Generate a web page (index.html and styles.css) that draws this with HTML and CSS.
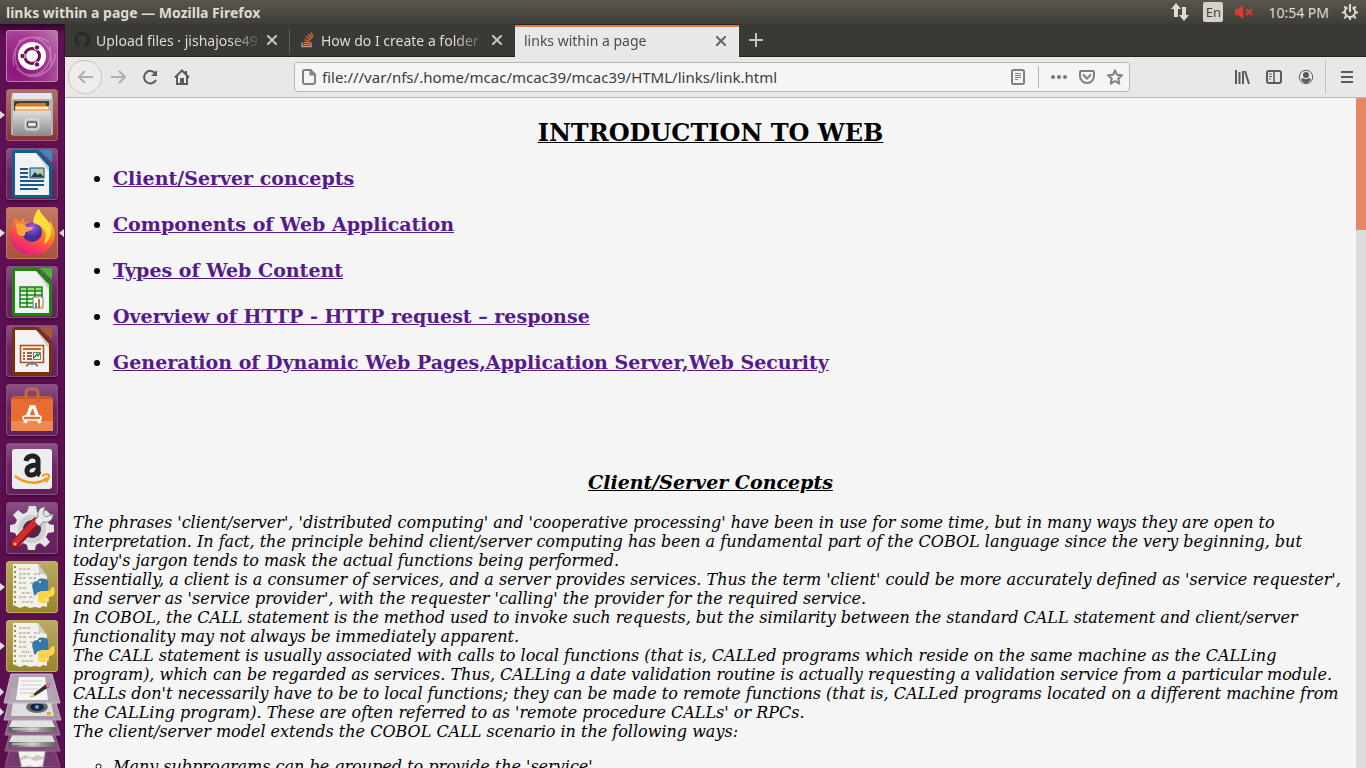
FILE: index.html
```html
<!DOCTYPE html>
<html lang="en">
<head>
<meta charset="utf-8">
<title>links within a page</title>
<link rel="stylesheet" href="styles.css">
</head>
<body>
<header class="panel">
  <span class="panel-title">links within a page — Mozilla Firefox</span>
  <div class="indicators">
    <button class="ind" aria-label="Network"><svg width="18" height="18" viewBox="0 0 18 18" fill="#dfdbd2"><path d="M5 0l5 6H7v8H3V6H0z"/><path d="M13 18l-5-6h3V4h4v8h3z"/></svg></button>
    <button class="ind lang">En</button>
    <button class="ind sound" aria-label="Sound muted"><svg width="18" height="14" viewBox="0 0 18 14"><path d="M0 4h3l5-4v14l-5-4H0z" fill="#df382c"/><path d="M11 4l6 6m0-6l-6 6" stroke="#df382c" stroke-width="2"/></svg></button>
    <button class="ind clock">10:54 PM</button>
    <button class="ind" aria-label="Session"><svg width="18" height="18" viewBox="0 0 18 18" fill="none" stroke="#dfdbd2" stroke-width="2"><path d="M6.500 4.300a5.200 5.200 0 1 0 5 0M9 1v8"/><path d="M9 14.500V17M1 9.500h2.500M14.500 9.500H17M3.200 3.500L5 5.300M14.800 3.500L13 5.300M3.200 15.300L5 13.500M14.800 15.300L13 13.500"/></svg></button>
  </div>
</header>
<div class="desktop">
  <nav class="launcher" aria-label="Launcher">
    <button class="tile dash" aria-label="Dash"><svg viewBox="0 0 52 52"><g fill="none" stroke="#fff" stroke-opacity=".28" stroke-width="1.500"><path d="M8 36C3 12 25 0 43 12M12 12C33-3 52 22 43 40M44 16c5 25-19 38-34 22M39 42C20 54 2 36 12 14M16 43C34 54 50 36 49 24"/></g><circle cx="26" cy="26" r="14" fill="#fff"/><circle cx="26" cy="26" r="7.500" fill="none" stroke="#6d1156" stroke-width="3"/><g fill="#6d1156" stroke="#fff"><circle cx="16.500" cy="26" r="2.700"/><circle cx="31" cy="17.500" r="2.700"/><circle cx="31" cy="34.500" r="2.700"/></g></svg></button>
    <button class="tile files running" aria-label="Files"><svg viewBox="0 0 52 52"><defs><linearGradient id="cab" x2="0" y2="1"><stop stop-color="#dedede"/><stop offset="1" stop-color="#8a8a8a"/></linearGradient></defs><path d="M6 4h40l1 7v35H5V11z" fill="#b4b4b0"/><path d="M7 4h38l1 6H6z" fill="#e6e6e6"/><path d="M8 12h35v12H8z" fill="#403d38"/><path d="M10 15l4-1h26v8H9z" fill="#e27027"/><path d="M9 17h34v6H9z" fill="#f8b269"/><path d="M10 18h32v2H10z" fill="#fff3d5"/><path d="M7 22h38v25H7z" fill="url(#cab)"/><rect x="19" y="30" width="14" height="11" rx="3" fill="#c4c4c4" stroke="#e2e2e2"/><rect x="21.500" y="33" width="9" height="5" rx="1" fill="#eee" stroke="#555" stroke-width="1.500"/></svg></button>
    <button class="tile" aria-label="LibreOffice Writer"><svg viewBox="0 0 52 52"><path d="M9 2h23l14 15v30a3 3 0 0 1-3 3H9a3 3 0 0 1-3-3V5a3 3 0 0 1 3-3z" fill="#0e5f91"/><path d="M34 2h10q2 0 2 2v10z" fill="#398dba"/><path d="M9 5h21l13 14v28H9z" fill="#f2f2f2"/><path d="M30 5l13 14v5z" fill="#ccc"/><path d="M14 21h8M14 25h8M14 29h8M14 33h24M14 37h24M14 41h18" stroke="#125b8c" stroke-width="2"/><path d="M24 20h14v10H24z" fill="#a6d0e8" stroke="#124766"/><circle cx="35" cy="23" r="2" fill="#f7c42d"/><path d="M25 29l4-5 3 3 2-2 4 4z" fill="#283a35"/></svg></button>
    <button class="tile firefox running focused" aria-label="Firefox"><svg viewBox="0 0 52 52"><defs><linearGradient id="ff" x1=".8" y1="0" x2=".3" y2="1"><stop stop-color="#fff44f"/><stop offset=".35" stop-color="#ff9a1f"/><stop offset=".65" stop-color="#ff4f45"/><stop offset="1" stop-color="#e31587"/></linearGradient><radialGradient id="globe" cx=".5" cy=".25"><stop stop-color="#a45af0"/><stop offset="1" stop-color="#442f99"/></radialGradient></defs><path d="M10 11l3 4 5-4 0 5c4-2 7-1 10 0 0-6 1-11 5-14 1 6 5 8 8 11l1 4 2-3c5 8 6 15 3 21-4 10-13 14-22 13C12 47 3 38 4 25c1-6 3-10 6-14z" fill="url(#ff)"/><circle cx="26" cy="25" r="10" fill="url(#globe)"/><path d="M10 17c4-2 9 0 11 3h6c0 3-4 4-7 5-2 2 0 4-3 4-3 0-5-1-6-3z" fill="#ffa436"/><path d="M27 16C28 9 30 5 33 2c2 7 14 13 12 24-1 6-4 9-7 11 5-12 0-18-11-21z" fill="#ffdd3d"/></svg></button>
    <button class="tile" aria-label="LibreOffice Calc"><svg viewBox="0 0 52 52"><path d="M9 2h23l14 15v30a3 3 0 0 1-3 3H9a3 3 0 0 1-3-3V5a3 3 0 0 1 3-3z" fill="#1c8710"/><path d="M34 2h10q2 0 2 2v10z" fill="#44b539"/><path d="M9 5h21l13 14v28H9z" fill="#f2f2f2"/><path d="M30 5l13 14v5z" fill="#ccc"/><path d="M14 21h22v20H14z" fill="#e1f6d8"/><path d="M14 21h22v4H14z" fill="#9bdf83"/><path d="M14 21h22v20H14zM14 25h22M14 29h22M14 33h22M14 37h22M21 21v20M29 21v20" fill="none" stroke="#178315" stroke-width="1.500"/><path d="M27 31h10v11H27z" fill="#fff" stroke="#777"/><path d="M29 37h2v5h-2z" fill="#2a8ed0"/><path d="M32 33h2v9h-2z" fill="#e5641c"/><path d="M35 39h2v3h-2z" fill="#f3be19"/></svg></button>
    <button class="tile" aria-label="LibreOffice Impress"><svg viewBox="0 0 52 52"><path d="M9 2h23l14 15v30a3 3 0 0 1-3 3H9a3 3 0 0 1-3-3V5a3 3 0 0 1 3-3z" fill="#7a310d"/><path d="M34 2h10q2 0 2 2v10z" fill="#a65b2c"/><path d="M9 5h21l13 14v28H9z" fill="#f2f2f2"/><path d="M30 5l13 14v5z" fill="#ccc"/><path d="M14.500 20.500h23v17h-23z" fill="#fff1e6" stroke="#b44c18" stroke-width="1.500"/><path d="M17 24h18" stroke="#d06427" stroke-width="2"/><path d="M17 28h2m2 0h5M17 31h2m2 0h5M17 34h2m2 0h5" stroke="#77310c" stroke-width="1.500"/><path d="M27.500 27.500h7v7h-7z" fill="#fff" stroke="#777"/><path d="M28 33l3-4 1 2 2-3" fill="none" stroke="#2a9133" stroke-width="1.500"/><path d="M26 37v3m0-3l-6 4m6-4l6 4" stroke="#777" stroke-width="2"/></svg></button>
    <button class="tile" aria-label="Ubuntu Software"><svg viewBox="0 0 52 52"><path d="M5 15l3-3h36l3 3v32H5z" fill="#e96d31"/><path d="M5 15l3-3h36l3 3z" fill="#ca5728"/><path d="M5 37h42v10H5z" fill="#f1884e"/><path d="M20 18V9q0-4 4-4h4q4 0 4 4v9" fill="none" stroke="#c9683f" stroke-width="3"/><path d="M19 39l6-16h3l6 16" fill="none" stroke="#fff" stroke-width="3.500"/><rect x="17" y="32" width="18" height="4" rx="2" fill="#e96d31" stroke="#fff" stroke-width="1.500"/></svg></button>
    <button class="tile" aria-label="Amazon"><svg viewBox="0 0 52 52"><rect x="6" y="6" width="40" height="40" rx="3" fill="#eee"/><path d="M20 18c1-6 11-7 12-1v11q0 3 2 4M32 22c-5 0-11 1-11 6 0 6 9 5 11-1" fill="none" stroke="#222" stroke-width="5"/><path d="M9 33c10 8 24 9 32 2" fill="none" stroke="#f79a17" stroke-width="2.500"/><path d="M36 33q4-3 7-1 0 4-3 7" fill="none" stroke="#f79a17" stroke-width="2"/></svg></button>
    <button class="tile" aria-label="System Settings"><svg viewBox="0 0 52 52"><path d="M23 4h7l1 6 4 2 5-4 5 5-4 5 2 4 5 1v7l-6 1-2 4 4 5-5 5-5-4-4 2-1 5h-7l-1-5-4-2-5 4-5-5 4-5-2-4-5-1v-7l5-1 2-4-4-5 5-5 5 4 4-2z" fill="#e5e5e5"/><circle cx="26" cy="27" r="14" fill="#cfcfcf"/><circle cx="26" cy="27" r="9" fill="#51264d"/><path d="M9 42l21-22" stroke="#8e171a" stroke-width="9" stroke-linecap="round"/><path d="M9 41l20-21" stroke="#d12c2d" stroke-width="6" stroke-linecap="round"/><path d="M29 20c0-2 1-4 3-5-1-6 2-10 7-10l-2 7 3 3 7-3c0 6-4 9-10 8l-4 4z" fill="#e9e9e9" stroke="#888"/><circle cx="9" cy="42" r="1.500" fill="#f6b7a7"/></svg></button>
    <button class="tile script running" aria-label="IDLE"><svg viewBox="0 0 52 52"><path d="M7 3h25l9 12v31l-4-1-3 2-5-1-5 1-5-2-5 2-7-3z" fill="#f3f2e8"/><path d="M32 3l1 9 8 3z" fill="#ccc"/><path d="M9 5v39" stroke="#9c8b40" stroke-width="2" stroke-dasharray="2 3"/><path d="M13 8h11M13 13h12m3 0h6M13 17h7m3 0h8M13 22h7m4 0h10M13 27h8M16 32h9M13 36h7m3 0h5M16 41h11" stroke="#b5b5ae" stroke-width="1.500" stroke-dasharray="3 1"/><g id="py"><path d="M27 29c-2-6 0-9 5-9v-1c1-2 9-2 10 1v8c0 3-2 3-5 3h-4c-3 0-2 5-5 3z" fill="#3678a9"/><path d="M48 26c2 6 0 10-5 10v4c-1 3-9 3-11 0v-6c0-3 2-4 5-4h5c3 0 2-4 6-4z" fill="#ffd447"/><circle cx="34" cy="21" r="1" fill="#fff"/><circle cx="40" cy="39" r="1" fill="#fff"/></g></svg></button>
    <button class="tile script running" aria-label="IDLE script"><svg viewBox="0 0 52 52"><path d="M7 3h25l9 12v31l-4-1-3 2-5-1-5 1-5-2-5 2-7-3z" fill="#f3f2e8"/><path d="M32 3l1 9 8 3z" fill="#ccc"/><path d="M9 5v39" stroke="#9c8b40" stroke-width="2" stroke-dasharray="2 3"/><path d="M13 8h11M13 13h12m3 0h6M13 17h7m3 0h8M13 22h7m4 0h10M13 27h8M16 32h9M13 36h7m3 0h5M16 41h11" stroke="#b5b5ae" stroke-width="1.500" stroke-dasharray="3 1"/><use href="#py"/></svg></button>
    <button class="stack" aria-label="Editor, disks and trash"><svg width="65" height="96" viewBox="0 0 65 96"><defs><linearGradient id="edge"><stop stop-color="#555"/><stop offset=".5" stop-color="#bbb"/><stop offset="1" stop-color="#666"/></linearGradient></defs><path d="M12 67h40l8 27H5z" fill="#74396c" stroke="#8f5b88"/><path d="M18 76h28l-3 18H21z" fill="#c9c8c5"/><path d="M18 77l6-2 6 3 6-3 9 2-2 7-6-2-5 3-7-3-5 3zM21 87l8-2 6 3 8-2-1 6-7 2-6-2-6 2z" fill="#f4f3ef"/><path d="M12 53h40l8 25H5z" fill="#804f7a" stroke="#976a91"/><path d="M14 58h36l5 11H9z" fill="#ddd"/><path d="M9 69h46v5H9z" fill="url(#edge)"/><path d="M12 71h27" stroke="#e4e4e4"/><path d="M12 37h40l8 25H5z" fill="#8a5f86" stroke="#a17c9c"/><path d="M14 43h36l5 11H9z" fill="#e3e3e2"/><path d="M9 54h46v5H9z" fill="url(#edge)"/><path d="M12 56h27" stroke="#e4e4e4"/><path d="M12 16h40l9 31H4z" fill="#a892a6" stroke="#bcaaba"/><path d="M13 29h38l3 14H11z" fill="#dededc"/><ellipse cx="37" cy="34" rx="11" ry="6" fill="#646a70"/><ellipse cx="37" cy="34" rx="7" ry="4" fill="#18253a"/><circle cx="37" cy="34" r="2" fill="#6d9cd0"/><path d="M47 39h4v3h-4z" fill="#eaa72b"/><path d="M11 1h41l8 29H4z" fill="#b5a8b3" fill-opacity=".95" stroke="#c7bdc6"/><path d="M19 4h26l3 23H16z" fill="#f5f5f4"/><path d="M21 8h22M21 12h20M20 16h18M20 20h13" stroke="#ccc"/><path d="M32 22l14-11 3 3-14 9-5 1z" fill="#35332f"/><path d="M30 24l3-4 2 3z" fill="#edcf60"/><path d="M45 11l4-2q3 1 1 4l-3 2z" fill="#d273ad"/><path d="M0 15l4 4-4 4zM0 35l4 4-4 4z" fill="#ddd"/></svg></button>
  </nav>
  <main class="window">
    <div class="tabs" role="tablist">
      <div class="tab">
        <svg class="favicon" viewBox="0 0 16 16"><path d="M8 0a8 8 0 0 0-2.500 15.600V13c-2 .4-2.700-.6-3-1.500l-1-1c1-.5 1.600 1 2.300 1.300.7.300 1.300.2 1.800-.1.100-.5.300-.9.600-1.100C4 10.300 3 9 3 7c0-.9.300-1.600.8-2.200-.2-.6-.1-1.400.1-2 .8 0 1.600.4 2.200.9a8 8 0 0 1 3.800 0c.6-.5 1.400-.9 2.200-.9.200.6.300 1.400.1 2 .5.600.8 1.300.8 2.200 0 2-1 3.300-3.200 3.600.4.400.7 1 .7 2v3A8 8 0 0 0 8 0z" fill="#24292e"/></svg>
        <button class="tab-title" role="tab" aria-selected="false">Upload files · jishajose49</button>
        <button class="close" aria-label="Close tab"><svg viewBox="0 0 10 10"><path d="M0 0l10 10M10 0L0 10"/></svg></button>
      </div>
      <div class="tab">
        <svg class="favicon" viewBox="0 0 16 16" fill="none"><path d="M3 10.500v4h9v-4" stroke="#9a9c9f" stroke-width="1.500"/><path d="M4.500 12.500h6M4.700 10.200l6 .6M5.500 7.500l5.400 2M7 4.500l4.500 3.400M9.500 2l3 4.600M12.500.5l1 5" stroke="#e8703a" stroke-width="1.300"/></svg>
        <button class="tab-title" role="tab" aria-selected="false">How do I create a folder</button>
        <button class="close" aria-label="Close tab"><svg viewBox="0 0 10 10"><path d="M0 0l10 10M10 0L0 10"/></svg></button>
      </div>
      <div class="tab active">
        <button class="tab-title" role="tab" aria-selected="true">links within a page</button>
        <button class="close" aria-label="Close tab"><svg viewBox="0 0 10 10"><path d="M0 0l10 10M10 0L0 10"/></svg></button>
      </div>
      <button class="new-tab" aria-label="New tab"><svg width="14" height="14" viewBox="0 0 14 14"><path d="M7 0v14M0 7h14" stroke="#c8c4bc" stroke-width="2"/></svg></button>
    </div>
    <div class="toolbar">
      <button class="tool back" aria-label="Back"><svg viewBox="0 0 16 16"><path d="M8 2L2 8l6 6M2 8h14"/></svg></button>
      <button class="tool forward" aria-label="Forward"><svg viewBox="0 0 16 16"><path d="M9 2l6 6-6 6M15 8H1"/></svg></button>
      <button class="tool" aria-label="Reload"><svg viewBox="0 0 16 16"><path d="M13.500 4.500A6.300 6.300 0 1 0 14 11"/><path d="M15 1v6H9z" fill="#5a5a5a" stroke="none"/></svg></button>
      <button class="tool" aria-label="Home"><svg viewBox="0 0 16 16"><path d="M1 8.500L8 1.500l7 7M3 7.500V15h10V7.500"/><path d="M7 15v-5h2v5M12 2v3" /></svg></button>
      <span class="spring"></span>
      <div class="urlbar">
        <svg width="14" height="16" viewBox="0 0 14 16"><path d="M2.500 1H8.500L13 5.500V13a2 2 0 0 1-2 2H3a2 2 0 0 1-2-2V2.500A1.500 1.500 0 0 1 2.500 1zM8.500 1v4.500H13"/></svg>
        <input type="text" aria-label="Address" value="file:///var/nfs/.home/mcac/mcac39/mcac39/HTML/links/link.html">
        <button class="url-btn" aria-label="Reader view"><svg width="14" height="16" viewBox="0 0 14 16"><rect x="1" y="1" width="12" height="14" rx="1.500"/><path d="M4 4.500h6M4 6.500h6M4 8.500h6M4 10.500h3" stroke-width="1"/></svg></button>
        <span class="divider"></span>
        <button class="url-btn" aria-label="Page actions"><svg width="16" height="16" viewBox="0 0 16 16"><g fill="#777" stroke="none"><circle cx="2" cy="8" r="2"/><circle cx="8" cy="8" r="2"/><circle cx="14" cy="8" r="2"/></g></svg></button>
        <button class="url-btn" aria-label="Save to Pocket"><svg width="16" height="16" viewBox="0 0 16 16"><path d="M2 2h12q1 0 1 1v4a7 7 0 0 1-14 0V3q0-1 1-1z"/><path d="M4.500 6L8 9.500 11.500 6" stroke-linecap="round"/></svg></button>
        <button class="url-btn" aria-label="Bookmark"><svg width="16" height="16" viewBox="0 0 16 16"><path d="M8 1.300l2 4.500 5 .5-3.700 3.300 1 5L8 12l-4.300 2.600 1-5L1 6.300l5-.5z" stroke-linejoin="round"/></svg></button>
      </div>
      <span class="spring"></span>
      <button class="tool" aria-label="Library"><svg viewBox="0 0 16 16"><path d="M2 1v14M5.500 3v12M9 2v13M11 2l4 13"/></svg></button>
      <button class="tool" aria-label="Sidebars"><svg viewBox="0 0 16 16"><rect x="1" y="2" width="14" height="12" rx="2"/><path d="M8 2v12" stroke-width="1.500"/><path d="M3 5h3M3 7.500h3M3 10h2" stroke-width="1"/></svg></button>
      <button class="tool" aria-label="Account"><svg viewBox="0 0 16 16"><circle cx="8" cy="8" r="6.700" stroke-width="1"/><circle cx="8" cy="6" r="3" fill="#5a5a5a" stroke="none"/><path d="M3 10q2-1 3-.5 2 1.500 4 0 1-.5 3 .5-2 4-5 4t-5-4z" fill="#5a5a5a" stroke="none"/></svg></button>
      <span class="menu-line"></span>
      <button class="tool" aria-label="Menu"><svg viewBox="0 0 16 16"><path d="M2 3h12M2 8h12M2 13h12"/></svg></button>
    </div>
    <div class="viewport">
      <article class="page">
        <h1>INTRODUCTION TO WEB</h1>
        <ul class="topics">
          <li><a href="#client">Client/Server concepts</a></li>
          <li><a href="#components">Components of Web Application</a></li>
          <li><a href="#types">Types of Web Content</a></li>
          <li><a href="#http">Overview of HTTP - HTTP request – response</a></li>
          <li><a href="#dynamic">Generation of Dynamic Web Pages,Application Server,Web Security</a></li>
        </ul>
        <h2 id="client">Client/Server Concepts</h2>
        <p>The phrases 'client/server', 'distributed computing' and 'cooperative processing' have been in use for some time, but in many ways they are open to interpretation. In fact, the principle behind client/server computing has been a fundamental part of the COBOL language since the very beginning, but today's jargon tends to mask the actual functions being performed.<br>
        Essentially, a client is a consumer of services, and a server provides services. Thus the term 'client' could be more accurately defined as 'service requester', and server as 'service provider', with the requester 'calling' the provider for the required service.<br>
        In COBOL, the CALL statement is the method used to invoke such requests, but the similarity between the standard CALL statement and client/server functionality may not always be immediately apparent.<br>
        The CALL statement is usually associated with calls to local functions (that is, CALLed programs which reside on the same machine as the CALLing program), which can be regarded as services. Thus, CALLing a date validation routine is actually requesting a validation service from a particular module. CALLs don't necessarily have to be to local functions; they can be made to remote functions (that is, CALLed programs located on a different machine from the CALLing program). These are often referred to as 'remote procedure CALLs' or RPCs.<br>
        The client/server model extends the COBOL CALL scenario in the following ways:</p>
        <ul class="ways">
          <li>Many subprograms can be grouped to provide the 'service'</li>
        </ul>
      </article>
      <div class="scrollbar"><div class="thumb"></div></div>
    </div>
  </main>
</div>
</body>
</html>
```
FILE: styles.css
```css
* { box-sizing: border-box; }
body {
  margin: 0;
  height: 100vh;
  display: flex;
  flex-direction: column;
  overflow: hidden;
  font-family: "Noto Sans", "Open Sans", sans-serif;
  font-size: 14px;
}
button {
  border: 0;
  padding: 0;
  background: none;
  color: inherit;
  font: inherit;
  display: flex;
  align-items: center;
  justify-content: center;
}
svg { flex: none; display: block; }

.panel {
  flex: none;
  height: 24px;
  display: flex;
  align-items: center;
  justify-content: space-between;
  padding: 0 7px 0 6px;
  background: linear-gradient(#5a564d, #3e3d38);
  color: #dfdbd2;
}
.panel-title { font-weight: bold; }
.indicators { display: flex; align-items: center; }
.lang {
  width: 20px;
  height: 20px;
  margin: 0 12px 0 14px;
  border-radius: 2px;
  background: #d6d2ca;
  color: #45433e;
  font-size: 13px;
}
.clock { margin: 0 12px 0 15px; }

.desktop { flex: 1; min-height: 0; display: flex; }
.launcher {
  flex: none;
  width: 65px;
  padding-top: 6px;
  display: flex;
  flex-direction: column;
  align-items: center;
  gap: 7px;
  overflow: hidden;
  background: linear-gradient(#35052d, #5f1053 12px, #5a0f4e);
  border-right: 1px solid #4b0a42;
}
.tile {
  position: relative;
  flex: none;
  width: 52px;
  height: 52px;
  border-radius: 4px;
  background: linear-gradient(#8d5386, #6d2664 45%, #642059);
  box-shadow: inset 0 0 0 1px #84507d, 0 1px 3px #35052d;
}
.tile svg { width: 52px; height: 52px; }
.dash { background: radial-gradient(circle at 20% 75%, #8c0f77, #a53c93 60%, #c283b4); box-shadow: inset 0 0 0 1px #c17bb6; }
.files { background: linear-gradient(#b0716f, #84303a); box-shadow: inset 0 0 0 1px #a95d62; }
.firefox { background: linear-gradient(#c47c64, #a84f3b); box-shadow: inset 0 0 0 1px #c3775d; }
.script { background: linear-gradient(#bcab63, #95832e); box-shadow: inset 0 0 0 1px #c0b15f; }
.running::before, .focused::after {
  content: "";
  position: absolute;
  top: 22px;
  border: 4px solid transparent;
}
.running::before { left: -6px; border-left: 5px solid #ddd; border-right: 0; }
.focused::after { right: -6px; border-right: 5px solid #ddd; border-left: 0; }
.stack { flex: none; margin-top: -6px; }

.window { flex: 1; min-width: 0; display: flex; flex-direction: column; }
.tabs {
  flex: none;
  height: 33px;
  display: flex;
  background: #3b3934;
  border-bottom: 1px solid #252320;
  color: #dfdbd2;
}
.tab {
  width: 225px;
  padding: 0 9px;
  display: flex;
  align-items: center;
  background: linear-gradient(#66635c, #66635c) no-repeat right 5px / 1px 24px;
}
.tab:nth-child(2) { background: none; }
.favicon { width: 16px; height: 16px; margin-right: 6px; }
.tab-title {
  flex: 1;
  min-width: 0;
  overflow: hidden;
  white-space: nowrap;
  justify-content: flex-start;
  mask-image: linear-gradient(90deg, #000 80%, transparent);
}
.tab.active {
  width: 224px;
  height: 33px;
  background: linear-gradient(#252320 1px, #e9764a 1px 3px, #e8e8e7 3px);
  color: #4c4c4c;
}
.close { width: 18px; height: 18px; color: #c8c4bc; }
.active .close { color: #666; }
.close svg { width: 10px; height: 10px; stroke: currentColor; stroke-width: 2; }
.new-tab { width: 34px; height: 31px; }

.toolbar {
  flex: none;
  height: 41px;
  display: flex;
  align-items: center;
  padding: 0 3px;
  background: #e8e8e7;
  border-bottom: 1px solid #b9b7b5;
}
.tool { width: 32px; height: 32px; }
.tool svg { width: 16px; height: 16px; fill: none; stroke: #5a5a5a; stroke-width: 2; }
.back { width: 34px; height: 34px; border: 1px solid #c8c6c4; border-radius: 17px; background: #eeedec; }
.back svg, .forward svg { stroke: #b0afad; }
.spring { flex: none; width: 96px; }
.urlbar {
  flex: 1;
  min-width: 0;
  height: 30px;
  display: flex;
  align-items: center;
  padding: 0 0 0 7px;
  background: #f5f5f5;
  border: 1px solid #b9b5b1;
  border-radius: 4px;
}
.urlbar svg { fill: none; stroke: #808080; stroke-width: 2; }
.urlbar input {
  flex: 1;
  min-width: 0;
  padding: 0 0 0 6px;
  border: 0;
  outline: 0;
  background: none;
  color: #3c3c3c;
  font: inherit;
  font-size: 15px;
}
.url-btn { width: 28px; height: 28px; }
.divider { width: 1px; height: 22px; margin: 0 6px; background: #b9b7b5; }
.menu-line { width: 1px; height: 34px; margin: 0 5px 0 3px; background: #c2c0be; }

.viewport { flex: 1; min-height: 0; display: flex; background: #f5f5f5; }
.page {
  flex: 1;
  min-width: 0;
  overflow: hidden;
  padding: 21px 8px 0;
  color: #000;
  font: 16px/19px "DejaVu Serif", serif;
}
.page h1 {
  margin: 0 0 20px;
  text-align: center;
  text-decoration: underline;
  text-decoration-thickness: 1px;
  font-size: 24px;
  line-height: 28px;
}
.page ul { margin: 0; padding-left: 40px; }
.topics { display: grid; gap: 24px; font-size: 19px; line-height: 22px; font-weight: bold; }
.topics a { color: #551a8b; }
.page h2 {
  margin: 98px 0 20px;
  text-align: center;
  text-decoration: underline;
  font-size: 19px;
  line-height: 22px;
  font-style: italic;
}
.page p { margin: 0 0 16px; font-style: italic; }
.ways { list-style: circle; font-style: italic; }
.scrollbar { flex: none; width: 10px; background: #dcdcdc; }
.thumb { height: 132px; background: #e58762; border-radius: 1px; }
```
